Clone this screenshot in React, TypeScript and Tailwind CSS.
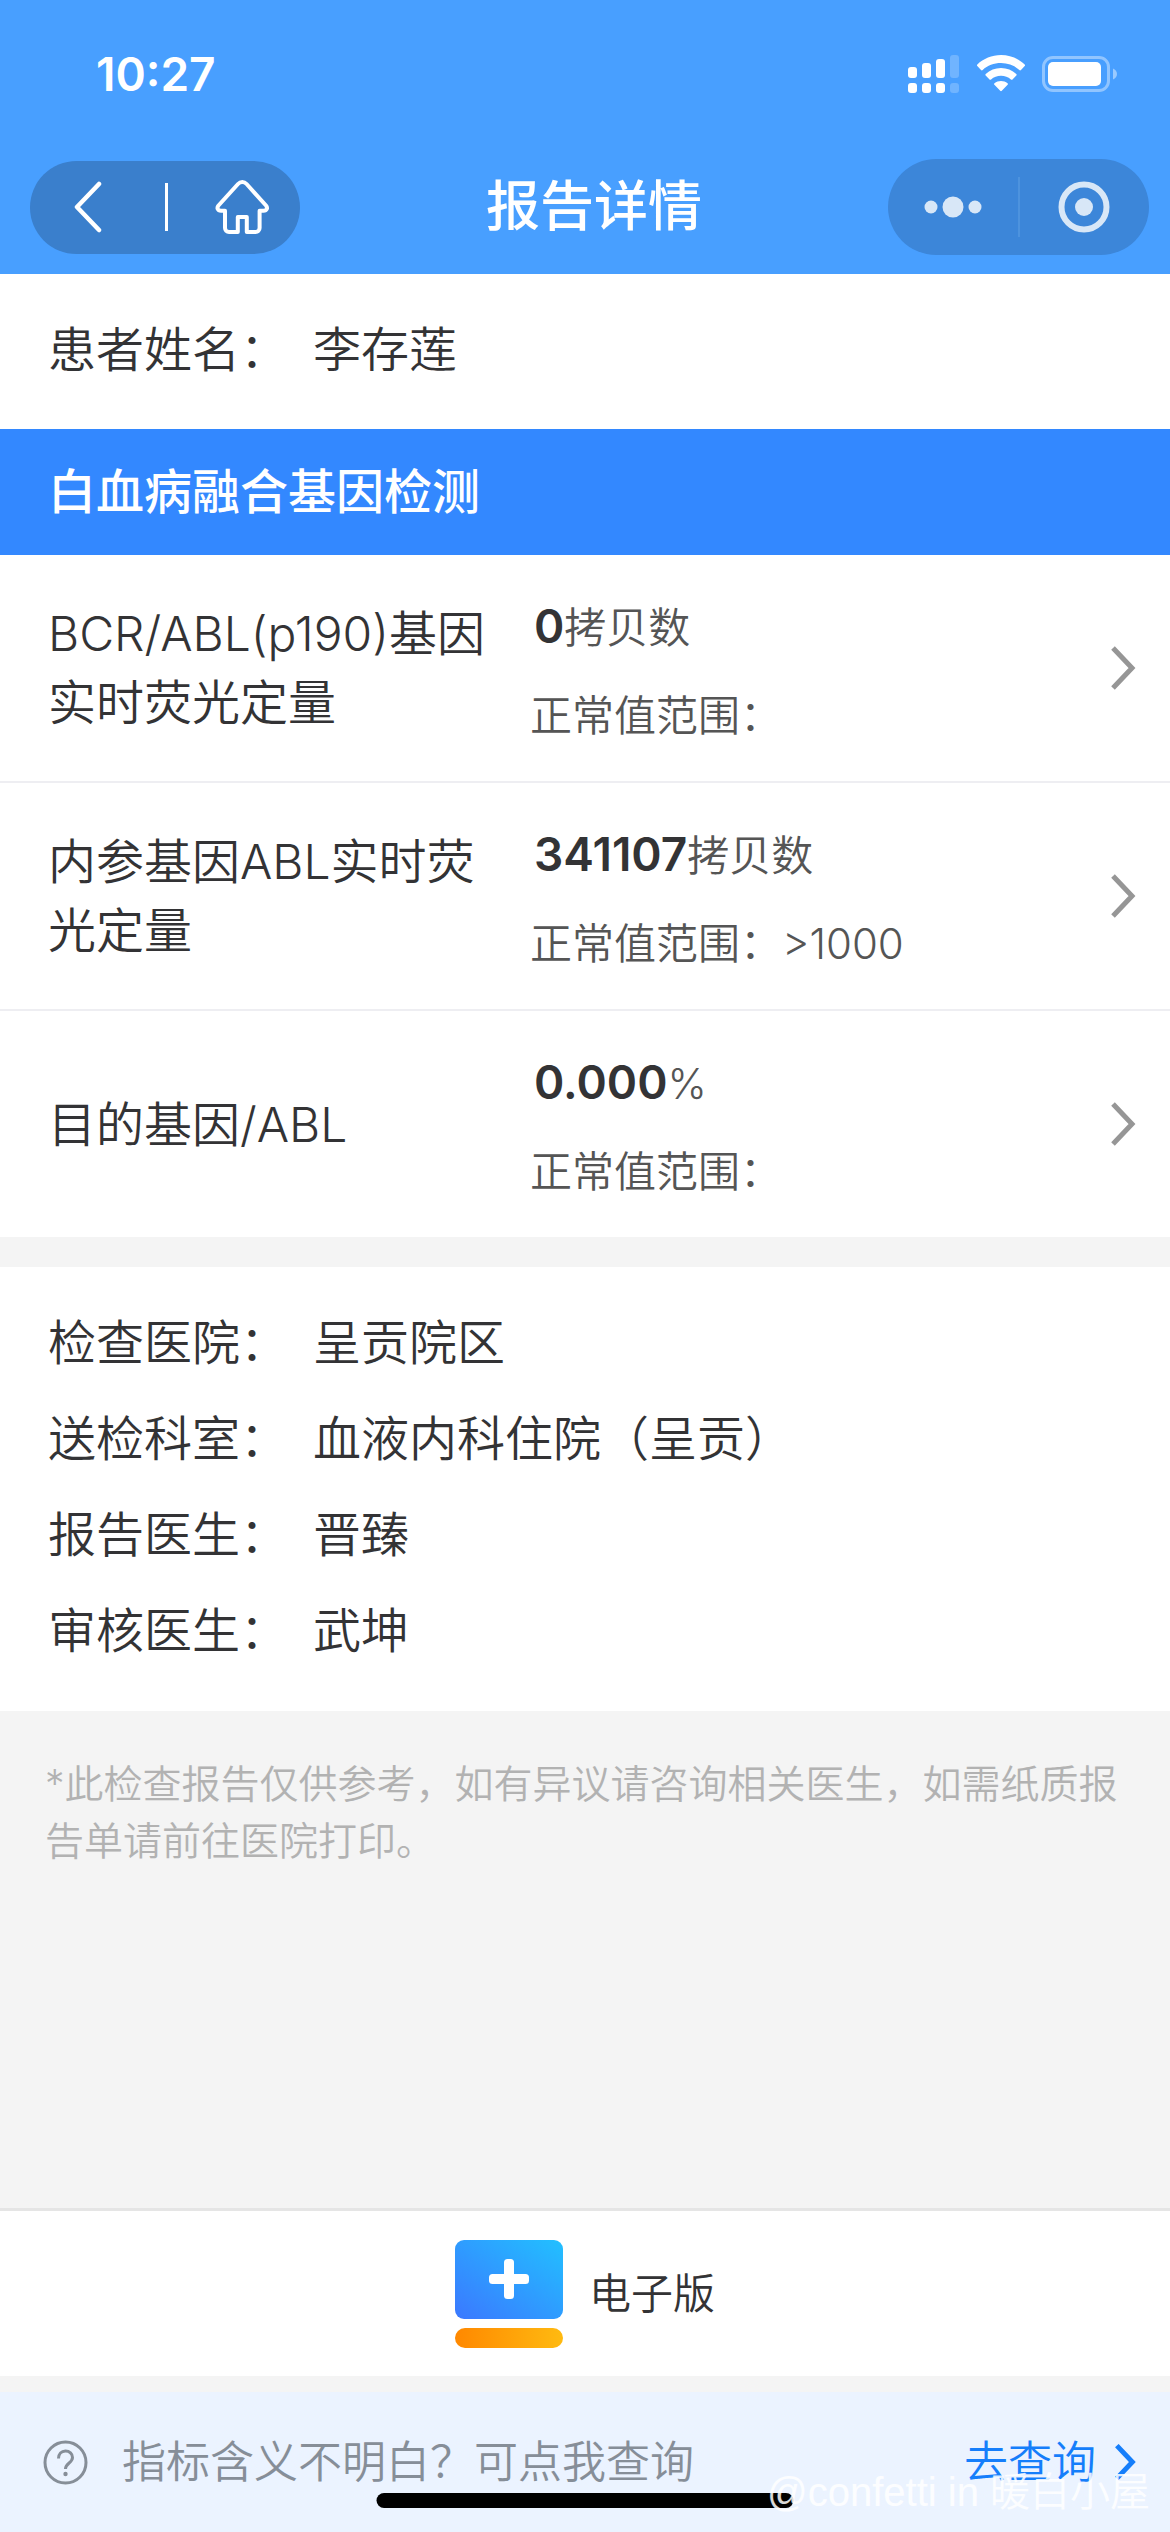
import React from "react";

type Result = { name: string; value: string; unit: string; range: string };

const results: Result[] = [
  { name: "BCR/ABL(p190)基因实时荧光定量", value: "0", unit: "拷贝数", range: "" },
  { name: "内参基因ABL实时荧光定量", value: "341107", unit: "拷贝数", range: ">1000" },
  { name: "目的基因/ABL", value: "0.000", unit: "%", range: "" },
];

const details = [
  { label: "检查医院", value: "呈贡院区" },
  { label: "送检科室", value: "血液内科住院（呈贡）" },
  { label: "报告医生", value: "晋臻" },
  { label: "审核医生", value: "武坤" },
];

function StatusBar() {
  return (
    <div className="flex h-[148px] items-center justify-between pl-24 pr-[52px]">
      <span className="text-[46px] leading-none font-semibold">10:27</span>
      <div className="flex items-center">
        <svg className="mr-4" width="52" height="38" viewBox="0 0 52 38" fill="#fff" aria-label="信号">
          <rect x="0" y="12" width="9" height="11" rx="3" />
          <rect x="14" y="8" width="9" height="15" rx="3" />
          <rect x="28" y="4" width="9" height="19" rx="3" />
          <rect x="42" y="0" width="9" height="23" rx="3" opacity=".22" />
          <rect x="0" y="28" width="9" height="10" rx="3" />
          <rect x="14" y="28" width="9" height="10" rx="3" />
          <rect x="28" y="28" width="9" height="10" rx="3" />
          <rect x="42" y="28" width="9" height="10" rx="3" opacity=".22" />
        </svg>
        <svg className="mr-4" width="50" height="38" viewBox="0 0 50 38" fill="#fff" aria-label="无线网络">
          <path d="M25 0c9.200 0 17.500 3.600 23.700 9.400.5.500.5 1.200 0 1.700l-3.700 3.900c-.5.500-1.200.5-1.700 0C38.500 10.700 32.100 8.100 25 8.100S11.500 10.700 6.700 15c-.5.500-1.200.5-1.700 0l-3.700-3.900c-.5-.5-.5-1.200 0-1.700C7.500 3.600 15.800 0 25 0z" />
          <path d="M25 13c5.900 0 11.200 2.200 15.300 5.900.5.500.5 1.200 0 1.700l-3.800 3.800c-.4.400-1.100.4-1.600 0-2.700-2.300-6.100-3.600-9.900-3.600s-7.200 1.300-9.900 3.600c-.5.400-1.200.4-1.600 0l-3.800-3.800c-.5-.5-.5-1.200 0-1.700C13.800 15.200 19.100 13 25 13z" />
          <path d="M25 26c2.500 0 4.700.8 6.500 2.200.5.400.6 1.100.1 1.600l-5.800 6c-.4.500-1.200.5-1.600 0l-5.800-6c-.5-.5-.4-1.200.1-1.600C20.300 26.800 22.500 26 25 26z" />
        </svg>
        <svg width="76" height="36" viewBox="0 0 76 36" aria-label="电池">
          <rect x="1.500" y="1.500" width="65" height="33" rx="9.500" fill="none" stroke="#fff" strokeWidth="3" opacity=".4" />
          <rect x="6" y="6" width="53" height="24" rx="5" fill="#fff" />
          <path d="M71 12.500c2.500 1 4 3 4 5.500s-1.500 4.500-4 5.500z" fill="#fff" opacity=".45" />
        </svg>
      </div>
    </div>
  );
}

function NavBar() {
  return (
    <div className="flex items-center justify-between pt-[11px] pr-[21px] pb-[19px] pl-[30px]">
      <div className="flex h-[93px] w-[270px] items-center rounded-full bg-[#3a7fcc]">
        <button type="button" aria-label="返回" className="flex w-[135px] justify-center pr-5">
          <svg width="30" height="52" viewBox="0 0 30 52" fill="none" stroke="#fff" strokeWidth="4.500" strokeLinecap="round" strokeLinejoin="round">
            <path d="M26 3 4 26l22 23" />
          </svg>
        </button>
        <span className="h-12 w-[3px] bg-white" />
        <button type="button" aria-label="首页" className="flex flex-1 justify-center pl-4">
          <svg width="56" height="56" viewBox="0 0 56 56" fill="none" stroke="#fff" strokeWidth="4" strokeLinejoin="round">
            <path d="M24 5c2.500-2.700 6.100-2.700 8.600 0L52 26.500c2 2.500.9 5.200-2.500 5.200h-3.900V49a4 4 0 0 1-4 4h-8.800V38h-9v15H15a4 4 0 0 1-4-4V31.700H7c-3.400 0-4.500-2.700-2.500-5.200z" />
          </svg>
        </button>
      </div>
      <h1 className="text-[54px] leading-none font-medium">报告详情</h1>
      <div className="flex h-24 w-[261px] items-center rounded-full bg-[#3c86d9]">
        <button type="button" aria-label="更多" className="flex flex-1 justify-center">
          <svg width="60" height="22" viewBox="0 0 60 22" fill="#d8e7f7">
            <circle cx="8" cy="11" r="6.500" />
            <circle cx="30" cy="11" r="10.500" />
            <circle cx="52" cy="11" r="6.500" />
          </svg>
        </button>
        <span className="h-15 w-0.5 bg-[#4d93de]" />
        <button type="button" aria-label="关闭" className="flex flex-1 justify-center">
          <svg width="52" height="52" viewBox="0 0 52 52">
            <circle cx="26" cy="26" r="22.500" fill="none" stroke="#d8e7f7" strokeWidth="6" />
            <circle cx="26" cy="26" r="9" fill="#d8e7f7" />
          </svg>
        </button>
      </div>
    </div>
  );
}

function Chevron({ className, width }: { className: string; width: number }) {
  return (
    <svg className={className} width="26" height="44" viewBox="0 0 26 44" fill="none" stroke="currentColor" strokeWidth={width} aria-hidden="true">
      <path d="M3 2l19 20L3 42" />
    </svg>
  );
}

function Field({ label, value }: { label: string; value: string }) {
  return (
    <div className="flex h-24 items-center">
      <dt className="w-[265px] shrink-0">{label}：</dt>
      <dd>{value}</dd>
    </div>
  );
}

export default function App() {
  return (
    <div className="relative flex min-h-screen flex-col bg-[#f4f4f4] font-['Inter','Noto_Sans_CJK_SC',sans-serif] text-5xl leading-none font-[350] text-[#333335]">
      <header className="bg-[#489fff] text-white">
        <StatusBar />
        <NavBar />
      </header>

      <main className="flex-1">
        <dl className="bg-white px-12 pt-7 pb-[31px]">
          <Field label="患者姓名" value="李存莲" />
        </dl>

        <section>
          <h2 className="flex h-[126px] items-center bg-[#3388ff] px-12 font-medium text-white">白血病融合基因检测</h2>
          <ul className="divide-y-2 divide-[#eeeef2] bg-white">
            {results.map((r) => (
              <li key={r.name}>
                <button type="button" className="flex h-[226px] w-full items-center pr-[34px] pl-12 text-left">
                  <span className="w-[452px] shrink-0 text-5xl leading-[69px]">{r.name}</span>
                  <span className="ml-[30px] flex flex-1 flex-col gap-[22px] pt-[5px] text-[42px] leading-[66px] text-[#555]">
                    <span className="pl-1">
                      <b className="text-[46px] leading-[66px] font-semibold text-[#333335]">{r.value}</b>
                      {r.unit}
                    </span>
                    <span>正常值范围：{r.range}</span>
                  </span>
                  <Chevron className="text-[#969696]" width={5} />
                </button>
              </li>
            ))}
          </ul>
        </section>

        <dl className="mt-[30px] bg-white px-12 pt-7 pb-8">
          {details.map((d) => (
            <Field key={d.label} label={d.label} value={d.value} />
          ))}
        </dl>

        <p className="px-[45px] pt-11 text-[39px] leading-[57px] text-[#b2b2b2]">
          *此检查报告仅供参考，如有异议请咨询相关医生，如需纸质报告单请前往医院打印。
        </p>
      </main>

      <footer>
        <button type="button" className="flex h-[168px] w-full items-center justify-center gap-[26px] border-t-3 border-[#e5e5e5] bg-white text-[42px]">
          <svg width="108" height="108" viewBox="0 0 108 108" aria-hidden="true">
            <defs>
              <linearGradient id="card" x1="0" y1="1" x2="1" y2="0">
                <stop offset="0" stopColor="#3b78ff" />
                <stop offset="1" stopColor="#22c0ff" />
              </linearGradient>
              <linearGradient id="bar" x1="0" y1="0" x2="1" y2="0">
                <stop offset="0" stopColor="#ff8800" />
                <stop offset="1" stopColor="#ffba10" />
              </linearGradient>
            </defs>
            <rect width="108" height="79" rx="9" fill="url(#card)" />
            <rect y="88" width="108" height="20" rx="10" fill="url(#bar)" />
            <rect x="34" y="34" width="40" height="10" rx="3.500" fill="#fff" />
            <rect x="49" y="19" width="10" height="40" rx="3.500" fill="#fff" />
          </svg>
          电子版
        </button>
        <div className="mt-4 flex h-[140px] items-center bg-[#ebf3ff] pr-8 pl-[43px] text-[44px]">
          <svg width="45" height="45" viewBox="0 0 45 45" fill="none" stroke="#868e98" strokeWidth="3" aria-hidden="true">
            <circle cx="22.500" cy="22.500" r="20.500" />
            <path d="M15.500 18.500c0-4.500 3-7.500 7-7.500s7 2.800 7 6.500c0 5.500-7 5.500-7 11.500" />
            <circle cx="22.500" cy="34" r="2.200" fill="#868e98" stroke="none" />
          </svg>
          <span className="ml-[34px] flex-1 text-[#868e98]">指标含义不明白？可点我查询</span>
          <a href="#query" className="flex items-center gap-4 text-[#157efb]">
            去查询
            <Chevron className="h-9" width={6} />
          </a>
        </div>
      </footer>

      <span className="absolute bottom-6 left-1/2 h-[15px] w-[417px] -translate-x-1/2 rounded-full bg-black" />
      <span className="absolute right-5 bottom-5 font-['Liberation_Sans','Noto_Sans_CJK_SC',sans-serif] text-[40px] leading-none text-white/85">@confetti in 暖白小屋</span>
    </div>
  );
}
